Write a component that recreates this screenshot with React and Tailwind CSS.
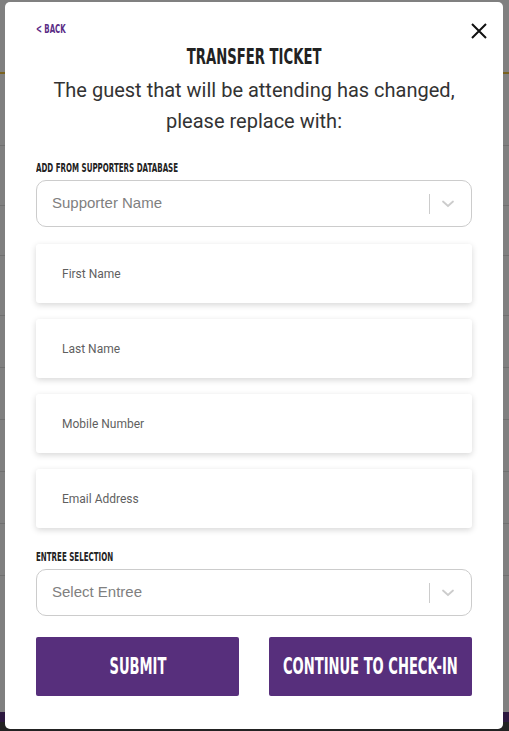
import React from 'react';

const heading = { fontFamily: '"DejaVu Sans", "Liberation Sans", sans-serif' };
const body = { fontFamily: '"Liberation Sans", Arial, sans-serif' };

function Chevron() {
  return (
    <svg width="14" height="10" viewBox="0 0 14 10">
      <path d="M2 2.5 L7 7 L12 2.5" fill="none" stroke="#cccccc" strokeWidth="1.8" strokeLinecap="round" />
    </svg>
  );
}

function SelectBox({ placeholder }) {
  return (
    <div className="flex h-[47px] items-center rounded-[10px] border border-[#cccccc] bg-white pl-[15px] pr-[5px]">
      <span className="flex-1 text-[15px] text-[#808080]" style={body}>
        {placeholder}
      </span>
      <span className="h-[20px] w-px bg-[#cccccc]" />
      <span className="flex w-[36px] items-center justify-center">
        <Chevron />
      </span>
    </div>
  );
}

function FieldCard({ label }) {
  return (
    <div className="flex h-[59px] items-center rounded-[3px] bg-white pl-[26px] shadow-[0_2px_6px_rgba(0,0,0,0.16)]">
      <span className="text-[12px] text-[#5f5f5f]" style={{ fontFamily: 'Roboto, "Liberation Sans", sans-serif' }}>{label}</span>
    </div>
  );
}

function Label({ children }) {
  return (
    <div className="h-[15px] whitespace-nowrap leading-[15px]">
      <span className="inline-block origin-left scale-x-[0.545] text-[13px] font-bold uppercase text-[#222]" style={heading}>
        {children}
      </span>
    </div>
  );
}

function Button({ children }) {
  return (
    <button className="flex h-[59px] w-[203px] items-center justify-center whitespace-nowrap rounded-[2px] bg-[#572f7c]">
      <span className="inline-block origin-center scale-x-[0.57] text-[23px] font-bold uppercase text-white" style={heading}>
        {children}
      </span>
    </button>
  );
}

const fields = ['First Name', 'Last Name', 'Mobile Number', 'Email Address'];

export default function App() {
  return (
    <div className="relative h-[731px] w-[509px] overflow-hidden bg-[#808080]">
      {/* dimmed page behind the modal */}
      <div className="flex h-full flex-col">
        <div className="h-[44px]" />
        <div className="h-[30px] border-b-2 border-[#7a6320]" />
        <div className="h-[72px] border-b border-[#707070]" />
        <div className="h-[60px] border-b border-[#707070]" />
        <div className="h-[50px] border-b border-[#707070]" />
        <div className="h-[60px] border-b border-[#707070]" />
        <div className="h-[52px] border-b border-[#707070]" />
        <div className="h-[52px] border-b border-[#707070]" />
        <div className="h-[52px] border-b border-[#707070]" />
        <div className="h-[52px] border-b border-[#707070]" />
        <div className="h-[52px] border-b border-[#707070]" />
        <div className="flex-1" />
        <div className="h-[10px] bg-[#2c183f]" />
        <div className="h-[9px] bg-[#222]" />
      </div>

      {/* modal */}
      <div className="absolute left-[5px] top-[2px] flex h-[727px] w-[498px] flex-col rounded-[5px] bg-white px-[31px] pt-[19px]">
        <div className="flex h-[16px] items-start justify-between">
          <span className="inline-block origin-left scale-x-[0.54] whitespace-nowrap text-[13px] font-bold uppercase leading-[16px] text-[#5b2d86]" style={heading}>
            &lt; Back
          </span>
          <svg width="18" height="18" viewBox="0 0 18 18" className="mr-[-16px] mt-[1px]">
            <path d="M2 2 L16 16 M16 2 L2 16" stroke="#111" strokeWidth="2" />
          </svg>
        </div>

        <div className="mt-[7px] whitespace-nowrap text-center leading-[26px]">
          <span className="inline-block origin-center scale-x-[0.6] text-[22px] font-bold uppercase text-[#222]" style={heading}>
            Transfer Ticket
          </span>
        </div>
        <p className="mt-[4px] text-center text-[20px] leading-[31px] text-[#333]" style={{ fontFamily: 'Roboto, "Liberation Sans", sans-serif' }}>
          The guest that will be attending has changed,
          <br />
          please replace with:
        </p>

        <div className="mt-[22px]">
          <Label>Add from Supporters Database</Label>
        </div>
        <div className="mt-[6px]">
          <SelectBox placeholder="Supporter Name" />
        </div>

        <div className="mt-[17px] flex flex-col gap-[16px]">
          {fields.map((f) => (
            <FieldCard key={f} label={f} />
          ))}
        </div>

        <div className="mt-[20px]">
          <Label>Entree Selection</Label>
        </div>
        <div className="mt-[6px]">
          <SelectBox placeholder="Select Entree" />
        </div>

        <div className="mt-[21px] flex justify-between">
          <Button>Submit</Button>
          <Button>Continue to Check-In</Button>
        </div>
      </div>
    </div>
  );
}
